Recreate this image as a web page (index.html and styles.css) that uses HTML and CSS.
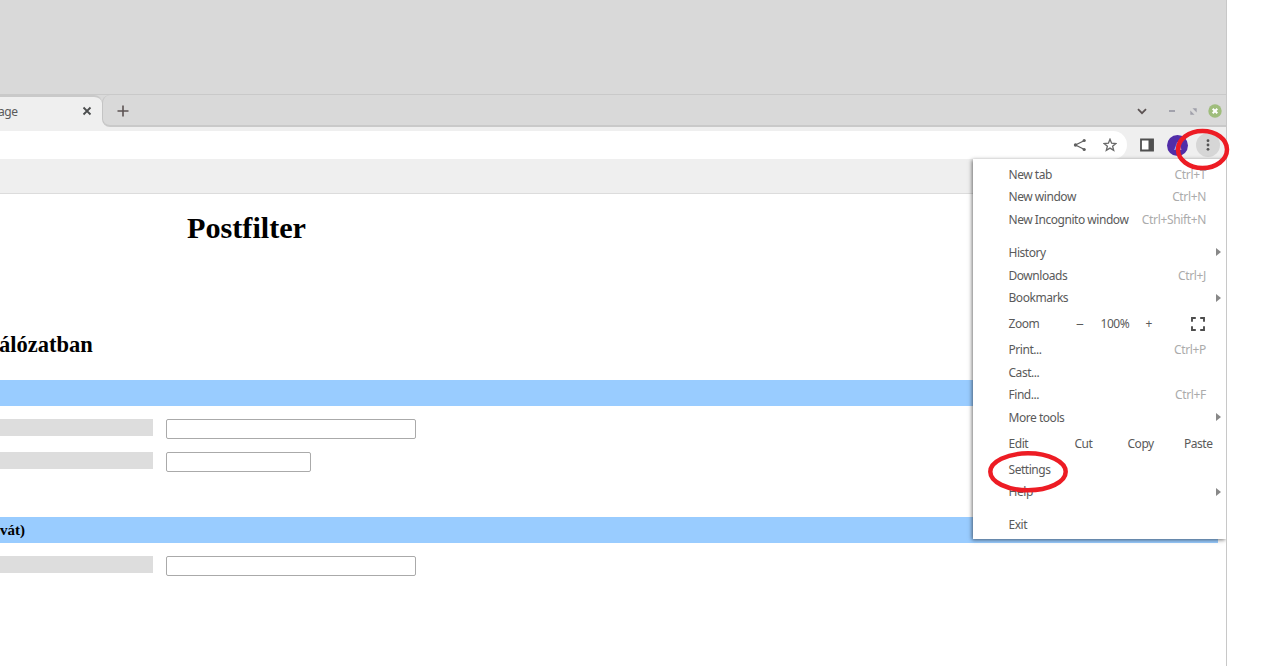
FILE: index.html
```
<!DOCTYPE html>
<html lang="hu">
<head>
  <meta charset="UTF-8" />
  <title>Postfilter</title>
  <link rel="stylesheet" href="styles.css">
</head>
<body>
  <div class="screen">
    <div class="desktop"></div>

    <div class="tab-strip">
      <div class="tab">
        <span class="tab-title">age</span>
        <svg class="tab-close" width="10" height="10" viewBox="0 0 10 10"><path d="M1.500 1.500l7 7M8.500 1.500l-7 7" stroke="#4b4d4e" stroke-width="1.800"/></svg>
      </div>
      <div class="tab-rest">
        <svg class="tab-new" width="12" height="12" viewBox="0 0 12 12"><path d="M6 .5v11M.5 6h11" stroke="#5c5353" stroke-width="1.600"/></svg>
        <div class="window-buttons">
          <svg width="10" height="7" viewBox="0 0 10 7"><path d="M1 1.200l4 4 4-4" fill="none" stroke="#5c5353" stroke-width="1.800"/></svg>
          <svg class="minimize" width="6" height="2" viewBox="0 0 6 2"><path d="M0 1h6" stroke="#9494a0" stroke-width="1.600"/></svg>
          <svg class="restore" width="7" height="7" viewBox="0 0 7 7"><path d="M2.500 .3h4.200v4.200zM.3 2.500v4.200h4.200z" fill="#a0a0aa"/></svg>
          <svg class="close" width="14" height="14" viewBox="0 0 14 14"><circle cx="7" cy="7" r="6.700" fill="#9fbd7c"/><path d="M4.700 4.700l4.600 4.600M9.300 4.700l-4.600 4.600" stroke="#fff" stroke-width="2"/></svg>
        </div>
      </div>
    </div>

    <div class="toolbar">
      <div class="address">
        <svg width="14" height="14" viewBox="0 0 14 14"><path d="M11.500 2.500L2.500 7l9 4.500" fill="none" stroke="#606060" stroke-width="1.300"/><g fill="#606060"><circle cx="11.200" cy="2.500" r="1.600"/><circle cx="2.500" cy="7" r="1.700"/><circle cx="11.200" cy="11.500" r="1.600"/></g></svg>
        <svg class="star" width="14" height="14" viewBox="0 0 14 14"><path d="M7 1.200l1.600 4 4.300.3-3.300 2.700 1.100 4.200L7 10.100l-3.700 2.300 1.100-4.200L1.100 5.500l4.300-.3z" fill="none" stroke="#686868" stroke-width="1.300"/></svg>
      </div>
      <svg class="side-panel" width="14" height="14" viewBox="0 0 14 14"><path d="M1 1.500h12v11H1z" fill="#fff" stroke="#505050" stroke-width="1.800"/><path d="M8.500 1h5v12h-5z" fill="#505050"/></svg>
      <div class="avatar">A</div>
      <div class="more">
        <svg width="4" height="14" viewBox="0 0 4 14"><g fill="#555"><circle cx="2" cy="2.700" r="1.400"/><circle cx="2" cy="7" r="1.400"/><circle cx="2" cy="11.300" r="1.400"/></g></svg>
      </div>
    </div>

    <div class="bookmarks-bar"></div>

    <div class="page">
      <h1>Postfilter</h1>
      <h2>álózatban</h2>
      <div class="section-bar"></div>
      <div class="form-row">
        <div class="row-label"></div>
        <input type="text" class="wide">
      </div>
      <div class="form-row">
        <div class="row-label"></div>
        <input type="text" class="narrow">
      </div>
      <div class="section-bar second">vát)</div>
      <div class="form-row">
        <div class="row-label"></div>
        <input type="text" class="wide">
      </div>
    </div>

    <div class="menu">
      <div class="item"><span>New tab</span><kbd>Ctrl+T</kbd></div>
      <div class="item"><span>New window</span><kbd>Ctrl+N</kbd></div>
      <div class="item"><span>New Incognito window</span><kbd>Ctrl+Shift+N</kbd></div>
      <div class="gap"></div>
      <div class="item"><span>History</span><i class="arrow"></i></div>
      <div class="item"><span>Downloads</span><kbd>Ctrl+J</kbd></div>
      <div class="item"><span>Bookmarks</span><i class="arrow"></i></div>
      <div class="item tall">
        <span class="zoom-label">Zoom</span>
        <span class="zoom-out">–</span>
        <span class="zoom-value">100%</span>
        <span class="zoom-in">+</span>
        <svg class="fullscreen" width="14" height="14" viewBox="0 0 14 14"><path d="M1 4.800V1h3.800M9.200 1H13v3.800M13 9.200V13H9.200M4.800 13H1V9.200" fill="none" stroke="#4d4d4d" stroke-width="1.900"/></svg>
      </div>
      <div class="item"><span>Print...</span><kbd>Ctrl+P</kbd></div>
      <div class="item"><span>Cast...</span></div>
      <div class="item"><span>Find...</span><kbd>Ctrl+F</kbd></div>
      <div class="item"><span>More tools</span><i class="arrow"></i></div>
      <div class="item tall">
        <span class="edit-label">Edit</span>
        <span class="cut">Cut</span>
        <span class="copy">Copy</span>
        <span class="paste">Paste</span>
      </div>
      <div class="item"><span>Settings</span></div>
      <div class="item"><span>Help</span><i class="arrow"></i></div>
      <div class="gap"></div>
      <div class="item"><span>Exit</span></div>
    </div>
  </div>

  <!-- red markers over the menu button and Settings -->
  <svg class="marks" width="1270" height="666" viewBox="0 0 1270 666">
    <ellipse cx="1202.500" cy="149.500" rx="24.500" ry="18.500"/>
    <ellipse cx="1028" cy="471.800" rx="37.700" ry="18.500"/>
  </svg>
</body>
</html>
```
FILE: styles.css
```
* {
  box-sizing: border-box;
}

body {
  margin: 0;
  background: #fff;
  overflow: hidden;
}

svg {
  display: block;
  flex-shrink: 0;
}

.screen {
  position: relative;
  width: 1227px;
  height: 666px;
  border-right: 1px solid #c8c8c8;
  font-family: "Noto Sans", sans-serif;
  font-size: 12px;
  letter-spacing: -0.46px;
  color: #5a5a5a;
}

.desktop {
  height: 95px;
  background: #d9d9d9;
  border-bottom: 1px solid #c9c9c9;
}

/* tabs */
.tab-strip {
  display: flex;
  height: 32px;
  background: linear-gradient(#d9d9d9 50%, #efefef 50%);
}

.tab {
  display: flex;
  align-items: center;
  justify-content: space-between;
  width: 102px;
  padding: 0 10px 2px 0;
  background: #efefef;
  border-top: 2px solid #c9c9c9;
  border-top-right-radius: 8px;
}

.tab-title {
  margin-left: -2px;
}

.tab-rest {
  flex: 1;
  display: flex;
  align-items: center;
  justify-content: space-between;
  padding: 2px 4px 0 14px;
  background: #d9d9d9;
  border-left: 1px solid #c4c4c4;
  border-bottom: 2px solid #c9c9c9;
  border-radius: 8px 0 0 8px;
}

.window-buttons {
  display: flex;
  align-items: center;
}

.minimize {
  margin-left: 22px;
}

.restore {
  margin-left: 15px;
}

.close {
  margin-left: 11px;
}

/* toolbar */
.toolbar {
  display: flex;
  align-items: center;
  height: 33px;
  padding: 4px 0 1px;
  background: #efefef;
}

.address {
  display: flex;
  align-items: center;
  justify-content: flex-end;
  width: 1127px;
  height: 28px;
  padding-right: 10px;
  background: #fff;
  border-radius: 0 15px 15px 0;
}

.star {
  margin-left: 16px;
}

.side-panel {
  margin-left: 13px;
}

.avatar {
  width: 21px;
  height: 21px;
  margin-left: 13px;
  border-radius: 50%;
  background: #512da8;
  color: #c9bce6;
  font-size: 11px;
  line-height: 21px;
  text-align: center;
}

.more {
  display: flex;
  align-items: center;
  justify-content: center;
  width: 24px;
  height: 24px;
  margin-left: 8px;
  border-radius: 50%;
  background: #d6d6d6;
}

.bookmarks-bar {
  height: 34px;
  background: #efefef;
  border-bottom: 1px solid #dcdcdc;
}

/* web page */
.page {
  font-family: "Liberation Serif", serif;
  letter-spacing: normal;
  color: #000;
}

h1 {
  margin: 0;
  padding: 16px 0 0 187px;
  font-size: 30.2px;
  line-height: 36px;
}

h2 {
  margin: 0 0 0 -1px;
  padding-top: 84px;
  font-size: 22.5px;
  line-height: 30px;
}

.section-bar {
  width: 1218px;
  height: 26px;
  margin-top: 20px;
  background: #99ccff;
  font-size: 15px;
  font-weight: bold;
  line-height: 26px;
}

.section-bar.second {
  margin-top: 45px;
}

.form-row {
  display: flex;
  height: 20px;
  margin-top: 13px;
}

.row-label {
  width: 153px;
  height: 17px;
  margin-right: 13px;
  background: #ddd;
}

input[type="text"] {
  height: 20px;
  padding: 0;
  border: 1px solid #aaa;
  border-radius: 2px;
  background: #fff;
}

.wide {
  width: 250px;
}

.narrow {
  width: 145px;
}

/* browser menu */
.menu {
  position: absolute;
  top: 159px;
  left: 973px;
  width: 253px;
  height: 380px;
  padding: 3.9px 20px 0 35.5px;
  background: #fff;
  box-shadow: -1px 1px 4px rgba(0, 0, 0, 0.55);
  clip-path: inset(-4px 0 -8px -8px);
}

.item {
  display: flex;
  align-items: center;
  justify-content: space-between;
  height: 22.67px;
  white-space: nowrap;
}

.item.tall {
  height: 29px;
  justify-content: flex-start;
}

.item.tall span {
  flex-shrink: 0;
}

.gap {
  height: 10.3px;
}

kbd {
  font-family: inherit;
  font-size: inherit;
  letter-spacing: -0.35px;
  color: #ababab;
}

.arrow {
  margin-right: -15px;
  border-left: 5px solid #888;
  border-top: 4px solid transparent;
  border-bottom: 4px solid transparent;
}

.zoom-label {
  width: 67px;
}

.edit-label {
  width: 66px;
}

.zoom-out {
  width: 25px;
  transform: scaleX(1.3);
  transform-origin: left;
}

.zoom-value {
  width: 45px;
}

.zoom-in {
  width: 45.5px;
}

.cut {
  width: 53px;
}

.copy {
  width: 56.5px;
}

.marks {
  position: absolute;
  top: 0;
  left: 0;
  fill: none;
  stroke: #ed1c24;
  stroke-width: 4.5;
}
```
